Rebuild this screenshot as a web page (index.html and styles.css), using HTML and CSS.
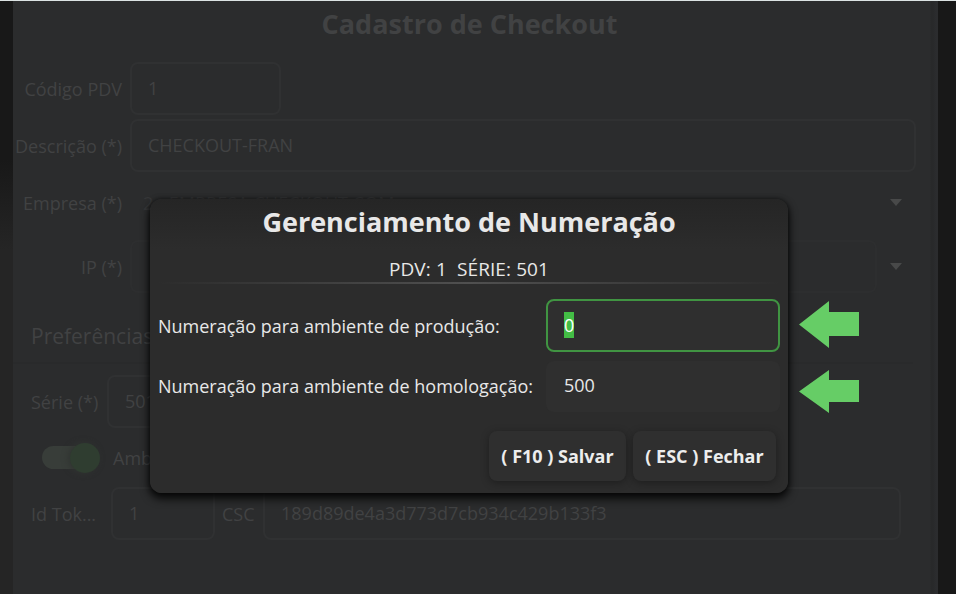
FILE: index.html
```html
<!DOCTYPE html>
<html lang="pt-BR">
<head>
<meta charset="utf-8">
<title>Cadastro de Checkout</title>
<link rel="stylesheet" href="styles.css">
</head>
<body>
<main class="form">
  <h1 class="form-title"><span>Cadastro de Checkout</span></h1>
  <div class="row"><label class="label">Código PDV</label><div class="box box-code">1</div></div>
  <div class="row"><label class="label">Descrição (*)</label><div class="box box-wide">CHECKOUT-FRAN</div></div>
  <div class="row row-company"><label class="label">Empresa (*)</label><div class="select"><span class="company">2 - EMPRESA CHECKOUT COM</span><i class="caret"></i></div></div>
  <div class="row row-ip"><label class="label">IP (*)</label><div class="box box-ip"></div><i class="caret"></i></div>
  <section class="prefs">
    <h2 class="prefs-title">Preferências</h2>
    <div class="prow"><label class="serie-label">Série (*)</label><div class="box box-serie">501</div></div>
    <div class="prow prow-toggle"><span class="toggle"><i class="knob"></i></span><span>Ambiente</span></div>
    <div class="prow"><label class="token-label">Id Tok...</label><div class="box box-token">1</div><label class="csc-label">CSC</label><div class="box box-csc">189d89de4a3d773d7cb934c429b133f3</div></div>
  </section>
</main>
<div class="dialog">
  <h2 class="dialog-title"><span>Gerenciamento de Numeração</span></h2>
  <p class="dialog-sub"><span>PDV: 1&nbsp; SÉRIE: 501</span></p>
  <div class="field field-first"><label>Numeração para ambiente de produção:</label><div class="input focused"><span class="selected">0</span></div></div>
  <div class="field"><label class="raised">Numeração para ambiente de homologação:</label><div class="input">500</div></div>
  <div class="actions"><button class="save">( F10 ) Salvar</button><button class="close">( ESC ) Fechar</button></div>
</div>
<svg class="arrow arrow-one" width="61" height="48" viewBox="0 0 61 48"><path d="M0 24.500 30 1V12H60V36H30V48Z"/></svg>
<svg class="arrow arrow-two" width="61" height="44" viewBox="0 0 61 44"><path d="M0 21.500 30 0V10H60V32H30V43Z"/></svg>
</body>
</html>
```
FILE: styles.css
```css
* { box-sizing: border-box; }
body {
  margin: 0; width: 956px; height: 594px; overflow: hidden; position: relative;
  border-top: 1px solid #dce3e3;
  background: linear-gradient(90deg, transparent 50%, #181818 50%), linear-gradient(#181818 160px, #252525 250px);
  font: 18px/24px "Open Sans", "Noto Sans", sans-serif; color: #414243;
}
h1, h2, p { margin: 0; }
.form {
  width: 925px; height: 593px; margin-left: 13px; padding-top: 4px;
  background: linear-gradient(90deg, #2b2c2d 0 917px, #28292a 918px 920px, #2b2c2e 923px);
}
.form-title { font-size: 27px; line-height: 38px; text-align: center; padding-right: 12px; margin-bottom: 19px; }
.row { display: flex; align-items: center; height: 53px; margin-bottom: 4px; }
.label { width: 109px; margin-right: 8px; text-align: right; white-space: nowrap; flex: none; }
.box { height: 53px; border: 2px solid #303132; border-radius: 8px; padding: 0 16px; line-height: 49px; white-space: nowrap; flex: none; }
.box-code { width: 151px; }
.box-wide { width: 786px; }
.row-company { margin-bottom: 11px; }
.select { width: 785px; height: 53px; padding: 0 13px; display: flex; align-items: center; justify-content: space-between; }
.company { color: #363738; letter-spacing: .08px; }
.caret { width: 12px; height: 7px; background: #484949; clip-path: polygon(0 0, 100% 0, 50% 100%); }
.row-ip { margin-bottom: 7px; }
.box-ip { width: 747px; margin-right: 13px; border-color: #2d2e2f; }
.prefs { width: 900px; padding-left: 18px; }
.prefs-title { font-size: 21px; font-weight: 400; line-height: 72px; height: 64px; border-bottom: 2px solid #292a2b; margin: 6px 0 11px -18px; padding-left: 18px; }
.prow { display: flex; align-items: center; height: 53px; }
.serie-label { width: 76px; }
.box-serie { width: 104px; }
.prow-toggle { height: 59px; padding-left: 11px; }
.toggle { width: 55px; height: 23px; border-radius: 12px; background: #383d39; margin-right: 16px; display: flex; align-items: center; justify-content: flex-end; }
.knob { width: 30px; height: 30px; border-radius: 50%; background: #2f3d30; flex: none; box-shadow: -2px 0 6px #303431; margin-right: -3px; }
.token-label { width: 80px; }
.box-token { width: 104px; margin-right: 7px; }
.csc-label { width: 41px; }
.box-csc { width: 638px; }
.dialog {
  position: absolute; left: 150px; top: 198px; width: 638px; height: 294px; border-radius: 12px;
  background: linear-gradient(#252525, #2c2c2c 50px); color: #e8e8e8;
  box-shadow: 0 5px 8px 1px #000c, 0 0 5px #0008; padding: 0 8px;
}
.dialog-title { font-size: 27px; line-height: 44px; text-align: center; padding-top: 1px; height: 56px; }
.dialog-sub { font-size: 19px; letter-spacing: .1px; height: 29px; line-height: 29px; text-align: center; border-bottom: 2px solid; border-image: linear-gradient(90deg, #2c2c2c, #505050 50%, #2c2c2c) 1; }
.field { display: flex; align-items: center; height: 51px; margin-top: 9px; white-space: nowrap; }
.field-first { height: 53px; margin-top: 15px; }
.field label { width: 388px; flex: none; }
.field .raised { padding-bottom: 2px; }
.input { width: 235px; height: 51px; background: #2f2f2f; border-radius: 8px; padding: 0 18px; line-height: 49px; }
.focused { height: 53px; border: 2px solid #409442; padding: 0 16px; }
.selected { background: #43bd45; color: #fff; display: inline-block; line-height: 26px; }
.actions { display: flex; justify-content: flex-end; gap: 7px; padding-right: 4px; margin-top: 19px; }
.actions button { height: 50px; padding: 0; border: 0; border-radius: 8px; background: #2f2f2f; color: #ededed; font: 700 18px/50px "Open Sans", sans-serif; box-shadow: 0 2px 9px #0005; white-space: nowrap; }
.save { width: 137px; }
.close { width: 143px; }
.arrow { position: absolute; left: 799px; fill: #66cd66; }
.arrow-one { top: 299px; }
.arrow-two { top: 369px; }
```
